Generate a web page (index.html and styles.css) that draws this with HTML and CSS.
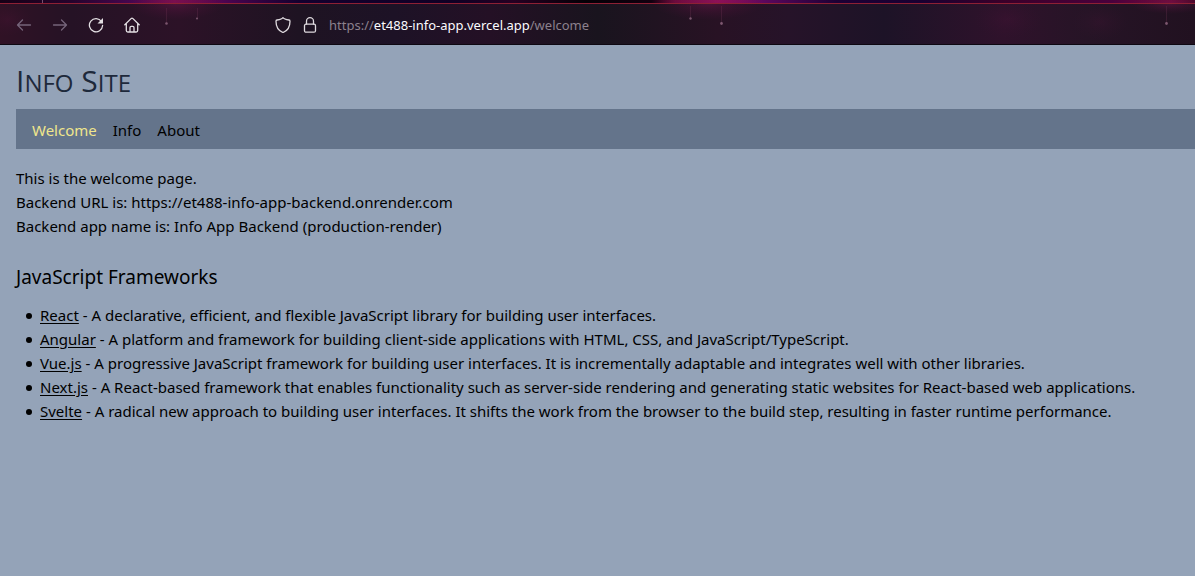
FILE: index.html
```html
<!DOCTYPE html>
<html lang="en">
<head>
<meta charset="utf-8">
<title>Info Site</title>
<link rel="stylesheet" href="styles.css">
</head>
<body>
<div class="browser-bar">
  <svg class="nebula" preserveAspectRatio="none" viewBox="0 0 1195 45" aria-hidden="true">
    <defs>
      <linearGradient id="strip">
        <stop offset="0" stop-color="#170016"/><stop offset=".06" stop-color="#26032c"/><stop offset=".11" stop-color="#46064f"/><stop offset=".146" stop-color="#8a0b55"/><stop offset=".19" stop-color="#4a044f"/><stop offset=".25" stop-color="#14002e"/><stop offset=".38" stop-color="#100024"/><stop offset=".43" stop-color="#260022"/><stop offset=".49" stop-color="#050006"/><stop offset=".545" stop-color="#12000f"/><stop offset=".565" stop-color="#72093d"/><stop offset=".6" stop-color="#a80e61"/><stop offset=".64" stop-color="#5b075d"/><stop offset=".7" stop-color="#1d0034"/><stop offset=".77" stop-color="#190031"/><stop offset=".84" stop-color="#3b0029"/><stop offset=".93" stop-color="#4a003c"/><stop offset=".98" stop-color="#76093c"/><stop offset="1" stop-color="#4b0628"/>
      </linearGradient>
      <linearGradient id="bar">
        <stop offset="0" stop-color="#301225"/><stop offset=".06" stop-color="#251225"/><stop offset=".15" stop-color="#2c1227"/><stop offset=".25" stop-color="#1e1322"/><stop offset=".33" stop-color="#1d1226"/><stop offset=".41" stop-color="#241025"/><stop offset=".5" stop-color="#19141e"/><stop offset=".6" stop-color="#281224"/><stop offset=".66" stop-color="#261329"/><stop offset=".74" stop-color="#1d1327"/><stop offset=".84" stop-color="#2f122b"/><stop offset=".91" stop-color="#261426"/><stop offset="1" stop-color="#211120"/>
      </linearGradient>
      <radialGradient id="glow"><stop offset="0" stop-color="#6a1549" stop-opacity=".5"/><stop offset="1" stop-color="#4a1238" stop-opacity="0"/></radialGradient>
    </defs>
    <rect width="1195" height="4" fill="url(#strip)"/>
    <rect y="4" width="1195" height="41" fill="url(#bar)"/>
    <g fill="url(#glow)">
      <ellipse cx="176" cy="4" rx="48" ry="16"/><ellipse cx="708" cy="4" rx="55" ry="16"/><ellipse cx="1170" cy="4" rx="40" ry="10"/>
      <ellipse cx="8" cy="20" rx="24" ry="16" opacity=".3"/><ellipse cx="1008" cy="20" rx="34" ry="18" opacity=".25"/><ellipse cx="1100" cy="22" rx="28" ry="18" opacity=".25"/>
    </g>
    <path d="M0 3.500H1195" stroke="#8d2034"/>
    <path d="M42.500 0V3" stroke="#76506f"/>
    <path d="M0 44.500H1195" stroke="#0e0812"/>
    <g stroke="#7b3b5b" stroke-opacity=".25"><path d="M166.500 8V23M197.500 8V18M690.500 6V18M721.500 6V24M1166.500 6V24"/></g>
    <g fill="#8f6780" opacity=".8"><circle cx="166.500" cy="23.500" r="1.300"/><circle cx="197" cy="18.500" r="1"/><circle cx="690.500" cy="18.500" r="1.200"/><circle cx="721.500" cy="23.500" r="1.400"/><circle cx="1166.500" cy="23.500" r="1.400"/></g>
  </svg>
  <div class="tools">
    <button class="tool" aria-label="Back" disabled><svg viewBox="0 0 16 16"><path d="M14.500 8H2M6.500 3 1.500 8 6.500 13"/></svg></button>
    <button class="tool" aria-label="Forward" disabled><svg viewBox="0 0 16 16"><path d="M1.500 8H14M9.500 3 14.500 8 9.500 13"/></svg></button>
    <button class="tool" aria-label="Reload"><svg viewBox="0 0 16 16"><path d="M13.500 4.500A6.600 6.600 0 1 0 14.600 8.500"/><path class="solid" d="M15 1V6.500H9.500Z"/></svg></button>
    <button class="tool" aria-label="Home"><svg viewBox="0 0 16 16"><path d="M.8 7.700 7.300 1.400Q8 .8 8.700 1.400L15.200 7.700M2.300 6.500V13.500Q2.300 15 3.800 15H12.200Q13.700 15 13.700 13.500V6.500M6 15V10.500Q6 9.300 7.200 9.300H8.800Q10 9.300 10 10.500V15"/></svg></button>
  </div>
  <div class="address">
    <svg class="glyph" viewBox="0 0 16 16" aria-hidden="true"><path d="M8 .7Q9 2.300 14 3Q15 3.200 15 4.200C15 9.500 12.500 13.800 8 15.500C3.500 13.800 1 9.500 1 4.200Q1 3.200 2 3Q7 2.300 8 .7Z"/></svg>
    <svg class="glyph" viewBox="0 0 16 16" aria-hidden="true"><rect x="2.500" y="7.200" width="11" height="8" rx="1.500"/><path d="M4.500 7V4.200A3.500 3.500 0 0 1 11.500 4.200V7"/></svg>
    <span class="url">https://<b>et488-info-app.vercel.app</b>/welcome</span>
  </div>
</div>
<div class="site">
  <h1 class="title">I<span class="small">nfo</span> S<span class="small">ite</span></h1>
  <nav class="nav">
    <a class="link active" href="#welcome">Welcome</a>
    <a class="link" href="#info">Info</a>
    <a class="link" href="#about">About</a>
  </nav>
  <main class="content">
    <p>This is the welcome page.</p>
    <p>Backend URL is: https://et488-info-app-backend.onrender.com</p>
    <p>Backend app name is: Info App Backend (production-render)</p>
    <h2 class="subtitle">JavaScript Frameworks</h2>
    <ul class="frameworks">
      <li><a href="#react">React</a> - A declarative, efficient, and flexible JavaScript library for building user interfaces.</li>
      <li><a href="#angular">Angular</a> - A platform and framework for building client-side applications with HTML, CSS, and JavaScript/TypeScript.</li>
      <li><a href="#vue">Vue.js</a> - A progressive JavaScript framework for building user interfaces. It is incrementally adaptable and integrates well with other libraries.</li>
      <li><a href="#next">Next.js</a> - A React-based framework that enables functionality such as server-side rendering and generating static websites for React-based web applications.</li>
      <li><a href="#svelte">Svelte</a> - A radical new approach to building user interfaces. It shifts the work from the browser to the build step, resulting in faster runtime performance.</li>
    </ul>
  </main>
</div>
</body>
</html>
```
FILE: styles.css
```css
* { box-sizing: border-box; }
body {
  margin: 0;
  background: #94a3b8;
  color: #000;
  font: 15px/24px "Segoe UI", "Noto Sans", "Open Sans", sans-serif;
}
h1, h2, p, ul { margin: 0; font-weight: 400; }
a { color: inherit; }
.browser-bar {
  position: relative;
  display: flex;
  align-items: center;
  height: 45px;
  padding: 4px 16px 0;
  background: #21121f;
}
.nebula { position: absolute; inset: 0; width: 100%; height: 100%; }
.tools, .address { position: relative; display: flex; align-items: center; }
.tools { gap: 20px; }
.tool {
  display: flex;
  padding: 0;
  border: 0;
  background: none;
  color: #e3dfe3;
}
.tool:disabled { color: #75647a; }
.tool svg, .glyph {
  width: 16px;
  height: 16px;
  fill: none;
  stroke: currentColor;
  stroke-width: 1.3;
  stroke-linecap: round;
  stroke-linejoin: round;
}
.tool .solid { fill: currentColor; stroke: none; }
.address { gap: 11px; margin-left: 135px; color: #ded9de; }
.url { font-size: 13px; color: #8c818d; }
.url b { font-weight: 400; color: #fbfbfe; }
.site { padding: 16px 0 16px 16px; }
.title {
  color: #1e293b;
  font-family: "Segoe UI", "Open Sans", sans-serif;
  font-size: 30px;
  line-height: 40px;
}
.small { font-size: 24px; line-height: 24px; text-transform: uppercase; }
.nav {
  display: flex;
  gap: 16px;
  margin-top: 8px;
  padding: 9px 16px 7px;
  background: #64748b;
}
.link { text-decoration: none; }
.active { color: #f0e68c; }
.content { padding-top: 17px; }
.subtitle { margin: 25px 0 12px; font-size: 19px; line-height: 28px; }
.frameworks { padding-left: 24px; list-style: none; }
.frameworks li::before {
  content: "";
  display: inline-block;
  width: 6px;
  height: 6px;
  margin: 0 8px 0 -14px;
  border-radius: 50%;
  background: currentColor;
  vertical-align: 2px;
}
.frameworks a { text-underline-offset: 2px; }
```
